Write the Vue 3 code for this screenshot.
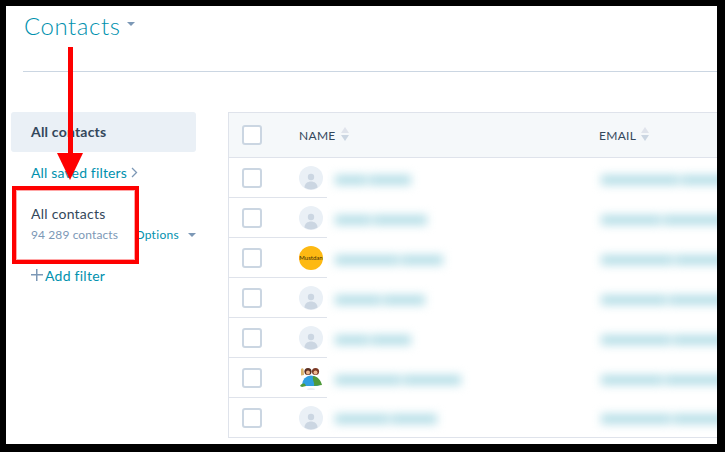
<template>
  <div class="frame">
    <div class="page">
      <header class="page-head">
        <h1>Contacts</h1>
        <span class="caret caret-big"></span>
      </header>

      <div class="content">
        <aside class="side">
          <div class="side-active">All contacts</div>
          <a class="side-link">All saved filters
            <svg width="7" height="11" viewBox="0 0 7 11"><path d="M1 1l4.5 4.5L1 10" fill="none" stroke="#7c98b6" stroke-width="1.3" /></svg>
          </a>
          <div class="view">
            <div class="view-text">
              <div class="view-name">All contacts</div>
              <div class="view-count">94 289 contacts</div>
            </div>
            <div class="view-options">Options <span class="caret"></span></div>
          </div>
          <a class="side-add"><span class="plus"></span>Add filter</a>
        </aside>

        <section class="table">
          <div class="head-row">
            <span class="check"></span>
            <span class="col col-name">NAME
              <svg class="sort" width="8" height="14" viewBox="0 0 8 14"><path d="M4 0l4 6H0z" fill="#dfe3eb" /><path d="M4 14L0 8h8z" fill="#cbd6e2" /></svg>
            </span>
            <span class="col col-email">EMAIL
              <svg class="sort" width="8" height="14" viewBox="0 0 8 14"><path d="M4 0l4 6H0z" fill="#dfe3eb" /><path d="M4 14L0 8h8z" fill="#cbd6e2" /></svg>
            </span>
          </div>

          <div v-for="(row, i) in rows" :key="i" class="row" :class="{ last: i === rows.length - 1 }">
            <div class="row-left">
              <span class="check"></span>
              <span v-if="row.avatar === 'brand'" class="avatar avatar-brand">Mustdan</span>
              <svg v-else-if="row.avatar === 'people'" class="avatar" viewBox="0 0 24 24">
                <ellipse cx="12" cy="23" rx="4" ry="0.6" fill="#d5dbe3" />
                <path d="M2 3c1-1 2-1 2.500 0l.5 6-3 .5z" fill="#d9b36c" />
                <circle cx="9" cy="5.500" r="3.600" fill="#5a2f22" />
                <circle cx="16.500" cy="5.500" r="3.600" fill="#7c3a26" />
                <circle cx="9" cy="6.500" r="2" fill="#f0b78f" />
                <circle cx="16.500" cy="6.500" r="2" fill="#f0b78f" />
                <path d="M3 19a9 9.500 0 0 1 18 0l-3 1H6z" fill="#2f9fe0" />
                <path d="M14 10c4 0 8 4 9 9l-8 1c1-3-2-6-1-10zM1 20c1-2 3-3 5-2l1 2-4 1z" fill="#4e9a3a" />
              </svg>
              <svg v-else class="avatar" viewBox="0 0 24 24">
                <circle cx="12" cy="12" r="12" fill="#eaf0f6" />
                <circle cx="12" cy="11" r="3.200" fill="#cbd6e2" />
                <path d="M5.500 21.500c0-8 13-8 13 0a12 12 0 0 1-13 0z" fill="#cbd6e2" />
              </svg>
            </div>
            <div class="row-right">
              <div class="smudge-name">
                <i v-for="(w, n) in row.name" :key="n" :style="{ width: w + 'px' }"></i>
              </div>
              <div class="smudge-email">
                <i v-for="(w, n) in row.email" :key="n" :style="{ width: w + 'px' }"></i>
              </div>
            </div>
          </div>
        </section>
      </div>
    </div>

    <div class="callout"></div>
    <div class="arrow-line"></div>
    <div class="arrow-head"></div>
  </div>
</template>

<script setup>
const rows = [
  { avatar: "person", name: [32, 42], email: [78, 50] },
  { avatar: "person", name: [36, 54], email: [60, 70] },
  { avatar: "brand", name: [64, 42], email: [72, 60] },
  { avatar: "person", name: [46, 42], email: [66, 60] },
  { avatar: "person", name: [34, 40], email: [70, 56] },
  { avatar: "people", name: [66, 58], email: [62, 70] },
  { avatar: "person", name: [54, 46], email: [70, 60] },
];
</script>

<style>
html,
body {
  margin: 0;
  background: #000;
}
</style>

<style scoped>
.frame {
  position: relative;
  box-sizing: border-box;
  width: 725px;
  height: 452px;
  border-style: solid;
  border-color: #000;
  border-width: 6px 8px 8px 6px;
  background: #fff;
  overflow: hidden;
  font-family: Lato, "Open Sans", sans-serif;
  color: #33475b;
}

.page-head {
  display: flex;
  align-items: center;
  box-sizing: border-box;
  height: 66px;
  margin-left: 17px;
  padding: 0 0 27px 1px;
  border-bottom: 1px solid #cbd6e2;
}

.page-head h1 {
  margin: 0;
  font-size: 24px;
  font-weight: 300;
  letter-spacing: 0.55px;
  color: #0091ae;
}

.caret {
  display: inline-block;
  width: 0;
  height: 0;
  border-left: 4px solid transparent;
  border-right: 4px solid transparent;
  border-top: 4px solid #7c98b6;
}

.caret-big {
  margin: 0 0 3px 7px;
}

.content {
  display: flex;
  gap: 32px;
  padding: 40px 0 0 5px;
}

.side {
  width: 185px;
  flex: none;
}

.side-active {
  box-sizing: border-box;
  height: 40px;
  padding-left: 20px;
  line-height: 40px;
  border-radius: 3px;
  background: #eaf0f6;
  font-size: 14px;
  font-weight: 700;
  letter-spacing: 0.2px;
}

.side-link {
  display: flex;
  align-items: center;
  gap: 4px;
  height: 40px;
  padding-left: 20px;
  font-size: 14px;
  letter-spacing: 0.15px;
  color: #0091ae;
}

.view {
  display: flex;
  align-items: flex-end;
  height: 66px;
  padding: 0 0 0 20px;
}

.view-text {
  width: 106px;
  padding-bottom: 14px;
}

.view-name {
  font-size: 14px;
  line-height: 20px;
  letter-spacing: 0.25px;
  margin-bottom: 2px;
}

.view-count {
  font-size: 12px;
  line-height: 18px;
  letter-spacing: 0.1px;
  color: #7c98b6;
}

.view-options {
  display: flex;
  align-items: center;
  gap: 9px;
  padding-bottom: 14px;
  line-height: 18px;
  font-size: 12px;
  letter-spacing: 0.3px;
  white-space: nowrap;
  color: #0091ae;
}

.side-add {
  display: flex;
  align-items: center;
  height: 30px;
  margin-top: 2px;
  padding-left: 20px;
  font-size: 14px;
  letter-spacing: 0.25px;
  color: #0091ae;
}

.plus {
  width: 12px;
  height: 12px;
  margin-right: 2px;
  background: linear-gradient(#7c98b6, #7c98b6) center / 12px 1.5px no-repeat,
    linear-gradient(#7c98b6, #7c98b6) center / 1.5px 12px no-repeat;
}

.table {
  flex: 1;
  border-top: 1px solid #dfe3eb;
  border-left: 1px solid #dfe3eb;
}

.check {
  box-sizing: border-box;
  flex: none;
  width: 20px;
  height: 20px;
  border: 2px solid #cbd6e2;
  border-radius: 3px;
  background: #fff;
}

.head-row {
  display: flex;
  align-items: center;
  box-sizing: border-box;
  height: 45px;
  padding-left: 13px;
  background: #f5f8fa;
  border-bottom: 1px solid #dfe3eb;
}

.col {
  display: flex;
  align-items: center;
  gap: 5px;
  font-size: 12px;
  letter-spacing: 0.3px;
}

.col-name {
  width: 300px;
  margin-left: 37px;
}

.sort {
  margin-top: -2px;
}

.row {
  display: flex;
  height: 40px;
}

.row-left {
  display: flex;
  align-items: center;
  gap: 37px;
  box-sizing: border-box;
  width: 98px;
  padding-left: 13px;
  border-bottom: 1px solid #dfe3eb;
}

.row-right {
  flex: 1;
  display: flex;
  align-items: center;
  box-sizing: border-box;
  padding-top: 3px;
  overflow: hidden;
}

.row.last .row-right {
  border-bottom: 1px solid #dfe3eb;
}

.avatar {
  flex: none;
  width: 24px;
  height: 24px;
}

.avatar-brand {
  display: flex;
  align-items: center;
  justify-content: center;
  border-radius: 50%;
  background: #fdb913;
  font-size: 6px;
  color: #3b2f08;
}

.smudge-name,
.smudge-email {
  display: flex;
  gap: 2px;
  filter: blur(5px);
}

.smudge-name {
  width: 266px;
  margin-left: 8px;
}

.smudge-email {
  flex: none;
}

.smudge-name i,
.smudge-email i {
  display: block;
  height: 10px;
  background: #b5dee7;
}

.callout {
  position: absolute;
  left: 6px;
  top: 180px;
  box-sizing: border-box;
  width: 127px;
  height: 78px;
  border: 4px solid #fe0000;
  box-shadow: inset 0 0 0 1px rgba(254, 0, 0, 0.35);
}

.arrow-line {
  position: absolute;
  left: 62px;
  top: 41px;
  width: 5px;
  height: 110px;
  background: #fe0000;
}

.arrow-head {
  position: absolute;
  left: 51px;
  top: 147px;
  width: 0;
  height: 0;
  border-left: 13.5px solid transparent;
  border-right: 13.5px solid transparent;
  border-top: 27px solid #fe0000;
}
</style>
